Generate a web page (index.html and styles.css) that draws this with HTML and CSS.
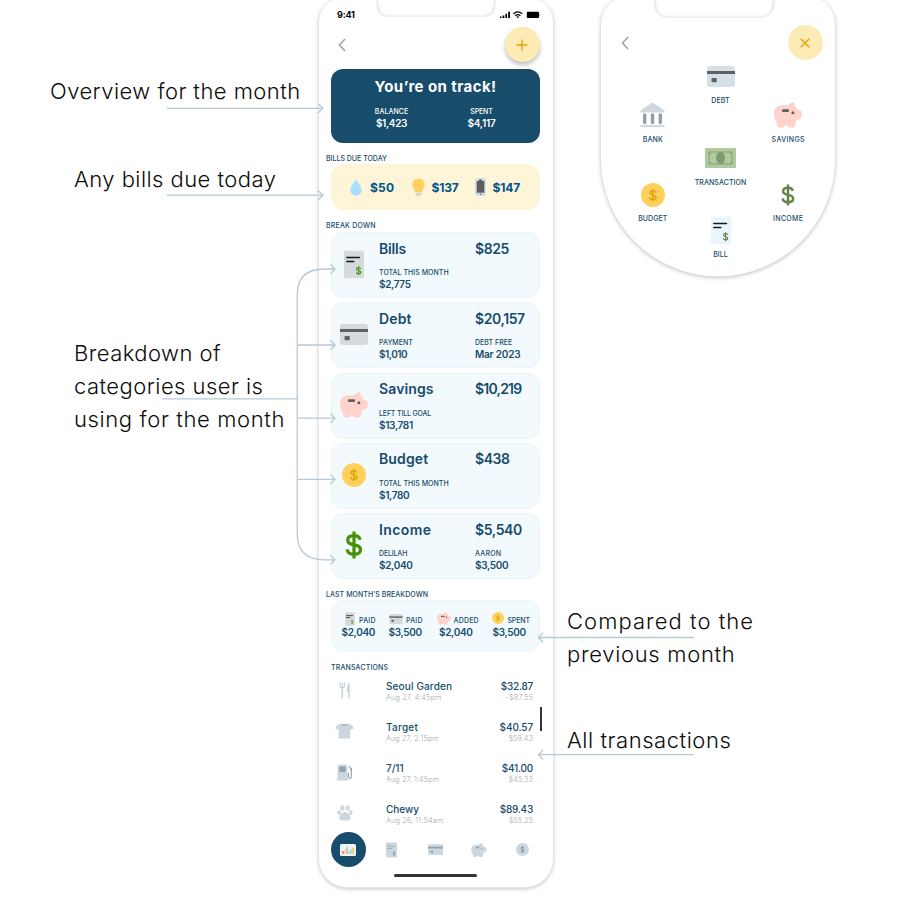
FILE: index.html
```
<!DOCTYPE html>
<html lang="en">
<head>
<meta charset="utf-8">
<title>Budget overview</title>
<link rel="stylesheet" href="styles.css">
</head>
<body>
<svg class="defs" width="0" height="0" aria-hidden="true">
  <symbol id="dollar" viewBox="0 0 18 28"><path d="M15 8.800C14.700 5.800 12.500 4.600 9 4.600C5.200 4.600 2.700 6.300 2.700 9.200C2.700 15.800 15.600 11.900 15.600 18.600C15.600 21.600 13 23.400 9 23.400C5 23.400 2.500 21.800 2.200 18.400M9 .5V27.500" fill="none" stroke="currentColor" stroke-width="3.200"/></symbol>
  <symbol id="receipt" viewBox="0 0 20 29">
    <path class="base" d="M0 0L1.700 1.800L3.300 0L5 1.800L6.700 0L8.300 1.800L10 0L11.700 1.800L13.300 0L15 1.800L16.700 0L18.300 1.800L20 0V29L18.300 27.200L16.700 29L15 27.200L13.300 29L11.700 27.200L10 29L8.300 27.200L6.700 29L5 27.200L3.300 29L1.700 27.200L0 29Z"/>
    <path class="mark" d="M2.800 7.500H15.500M2.800 11.600H9.800" stroke-width="1.500" stroke-linecap="round"/>
    <svg class="money" x="11.600" y="16" width="6" height="9.500" viewBox="0 0 18 28"><path d="M15 8.800C14.700 5.800 12.500 4.600 9 4.600C5.200 4.600 2.700 6.300 2.700 9.200C2.700 15.800 15.600 11.900 15.600 18.600C15.600 21.600 13 23.400 9 23.400C5 23.400 2.500 21.800 2.200 18.400M9 .5V27.500" fill="none" stroke="currentColor" stroke-width="3.500"/></svg>
  </symbol>
  <symbol id="card" viewBox="0 0 28 21"><rect class="base" width="28" height="21" rx="3"/><path class="dark" d="M0 5H28V8H0Z"/><rect class="dark" x="4.500" y="12" width="5.300" height="4.200" rx="1"/></symbol>
  <symbol id="pig" viewBox="0 0 28 25.400"><path class="base" d="M8.500 3H14C15 1.500 17 0 19.200 .2C20.600 .3 20.300 2 21 4.300C22.500 5.200 23.300 6.500 24 7.600C26.600 7.600 27.800 8.800 27.800 11C27.800 15 27 17 23.600 17.300C22.500 18.500 21.800 19 21.500 20.500C21.300 23.500 20.500 25 18.800 25.300H15.300C14 25 13 24 12.500 22.600H11C10.800 24 10 25.200 8.500 25.300H5.500C3.500 25 3 23 2.500 20C.5 17 0 14.500 0 11.500C0 6.500 3 3 8.500 3Z"/><rect class="dark" x="8" y="7" width="7" height="2.600" rx="1"/><circle class="dark" cx="18.900" cy="10.400" r="1.500"/></symbol>
  <symbol id="coin" viewBox="0 0 24 24"><circle class="base" cx="12" cy="12" r="12"/><svg class="money" x="7.600" y="5.600" width="8.600" height="13" viewBox="0 0 18 28"><path d="M15 8.800C14.700 5.800 12.500 4.600 9 4.600C5.200 4.600 2.700 6.300 2.700 9.200C2.700 15.800 15.600 11.900 15.600 18.600C15.600 21.600 13 23.400 9 23.400C5 23.400 2.500 21.800 2.200 18.400M9 .5V27.500" fill="none" stroke="currentColor" stroke-width="3.600"/></svg></symbol>
  <symbol id="back" viewBox="0 0 8 14"><path d="M7 1L1.500 7L7 13" fill="none" stroke="#95a3af" stroke-width="1.500"/></symbol>
</svg>

<main class="board">
  <aside class="notes notes-left">
    <p class="note overview">Overview for the month</p>
    <p class="note due">Any bills due today</p>
    <p class="note breakdown-note">Breakdown of<br>categories user is<br><span>using for the month</span></p>
  </aside>

  <section class="phone">
    <svg class="shell" viewBox="0 0 234 888" aria-hidden="true"><path d="M24 -2H53Q57.500 -2 57.500 3C57.500 12 62 17 71 17H163C172 17 176.500 12 176.500 3Q176.500 -2 181 -2H210A24 24 0 0 1 234 22V859.500A28 28 0 0 1 206 887.500H28A28 28 0 0 1 0 859.500V22A24 24 0 0 1 24 -2Z" fill="#fff"/></svg>
    <header class="status"><span class="clock">9:41</span>
      <svg width="42" height="9" viewBox="0 0 42 9"><path d="M1 6.500H2.500V8H1ZM3.600 5.500H5.300V8H3.600ZM6.400 3.800H8.100V8H6.400ZM9.200 1.800H11V8H9.200Z"/><path d="M14.300 3.900Q18.800 -.1 23.300 3.900M16.200 5.700Q18.800 3.500 21.400 5.700" fill="none" stroke="#000" stroke-width="1.200"/><path d="M17.400 6.700Q18.800 5.800 20.200 6.700L18.800 8.200Z"/><rect x="27.800" y="1.800" width="12.200" height="6.200" rx="1"/><path d="M40.700 3.700V6.300" stroke="#999" stroke-width=".8"/></svg>
    </header>
    <nav class="topbar"><svg width="8" height="14"><use href="#back"/></svg><button class="round raised" aria-label="Add"><svg width="12" height="12" viewBox="0 0 12 12"><path d="M6 .5V11.500M.5 6H11.500" stroke="#e3a70e" stroke-width="1.500"/></svg></button></nav>

    <div class="hero"><h1>You’re on track!</h1>
      <div class="hero-row"><div class="stat"><span class="cap">BALANCE</span><b class="amt">$1,423</b></div><div class="stat"><span class="cap tight">SPENT</span><b class="amt loose">$4,117</b></div></div>
    </div>

    <h2 class="label label-due">BILLS DUE TODAY</h2>
    <div class="due-card">
      <div class="due-item drop"><svg width="12" height="17" viewBox="0 0 12 17"><path d="M6 .3C8 4 11.700 7.500 11.700 11.200A5.700 5.500 0 0 1 .3 11.200C.3 7.500 4 4 6 .3Z" fill="#a8deff"/></svg><b class="fifty">$50</b></div>
      <div class="due-item bulb"><svg width="13" height="19" viewBox="0 0 13 19"><path d="M6.500 .5A6.300 6.300 0 0 1 12.800 6.800C12.800 10 10 11 9.800 14.500H3.200C3 11 .2 10 .2 6.800A6.300 6.300 0 0 1 6.500 .5Z" fill="#ffd15c"/><path d="M3 15.200H10L8.700 17.200L6.500 18.600L4.300 17.200Z" fill="#c9d3d8"/></svg><b>$137</b></div>
      <div class="due-item mobile"><svg width="11" height="18" viewBox="0 0 11 18"><rect x=".2" y=".2" width="10.600" height="17.500" rx="2" fill="#cfdbe2"/><path d="M1.700 3H9.300V14.700H1.700Z" fill="#5c5c5e"/><path d="M4 1.500H7V3H4Z" fill="#5c5c5e"/><circle cx="5.500" cy="16.200" r=".8" fill="#5c5c5e"/></svg><b>$147</b></div>
    </div>

    <h2 class="label label-break">BREAK DOWN</h2>
    <div class="breakdown">
      <article class="cat"><span class="ico"><svg class="receipt" width="20" height="29"><use href="#receipt"/></svg></span><div class="col"><h3 class="bills">Bills</h3><span class="cap">TOTAL THIS MONTH</span><b class="amt">$2,775</b></div><div class="col"><h3 class="sum">$825</h3></div></article>
      <article class="cat"><span class="ico"><svg class="card" width="28" height="21"><use href="#card"/></svg></span><div class="col"><h3>Debt</h3><span class="cap">PAYMENT</span><b class="amt thin">$1,010</b></div><div class="col"><h3 class="sum">$20,157</h3><span class="cap">DEBT FREE</span><b class="amt loose">Mar 2023</b></div></article>
      <article class="cat"><span class="ico"><svg class="pig" width="28" height="26"><use href="#pig"/></svg></span><div class="col"><h3>Savings</h3><span class="cap tight">LEFT TILL GOAL</span><b class="amt">$13,781</b></div><div class="col"><h3 class="sum narrow">$10,219</h3></div></article>
      <article class="cat"><span class="ico"><svg class="coin" width="24" height="24"><use href="#coin"/></svg></span><div class="col"><h3>Budget</h3><span class="cap">TOTAL THIS MONTH</span><b class="amt">$1,780</b></div><div class="col"><h3 class="sum">$438</h3></div></article>
      <article class="cat"><span class="ico"><svg class="income" width="18" height="28"><use href="#dollar"/></svg></span><div class="col"><h3 class="wide">Income</h3><span class="cap tight">DELILAH</span><b class="amt">$2,040</b></div><div class="col"><h3 class="sum">$5,540</h3><span class="cap open">AARON</span><b class="amt">$3,500</b></div></article>
    </div>

    <h2 class="label label-last">LAST MONTH’S BREAKDOWN</h2>
    <div class="last">
      <div class="past past-bill"><div class="past-top"><svg class="receipt" width="10" height="14"><use href="#receipt"/></svg><span class="cap open">PAID</span></div><b class="amt">$2,040</b></div>
      <div class="past past-card"><div class="past-top"><svg class="card" width="14" height="10"><use href="#card"/></svg><span class="cap open">PAID</span></div><b class="amt">$3,500</b></div>
      <div class="past past-pig"><div class="past-top"><svg class="pig" width="14" height="13"><use href="#pig"/></svg><span class="cap open">ADDED</span></div><b class="amt">$2,040</b></div>
      <div class="past past-coin"><div class="past-top"><svg class="coin" width="12" height="12"><use href="#coin"/></svg><span class="cap tight">SPENT</span></div><b class="amt">$3,500</b></div>
    </div>

    <h2 class="label label-trans">TRANSACTIONS</h2>
    <div class="list">
      <div class="row"><span class="row-ico"><svg width="12" height="17" viewBox="0 0 12 17"><path d="M1.200 .5V4Q1.200 6 3.300 6Q5.400 6 5.400 4V.5M3.300 .5V16.500" fill="none" stroke="#c4cfd7" stroke-width="1.100"/><path d="M3.300 7V16" stroke="#cdd6dc" stroke-width="1.600"/><path d="M10.800 .5V16.500H9.200V10H7.800C7.800 5 8.500 2 10.800 .5Z" fill="#cdd6dc"/></svg></span><div class="who"><b class="seoul">Seoul Garden</b><small class="long">Aug 27, 4:45pm</small></div><div class="paid"><b>$32.87</b><small class="minus">-$87.55</small></div></div>
      <div class="row"><span class="row-ico"><svg width="19" height="16" viewBox="0 0 19 16"><path d="M6.500 .5Q9.500 2.500 12.500 .5L16 1.500Q18.300 3 18.700 5.500L15.300 6.800V14.500Q15.300 15.500 14 15.500H5Q3.700 15.500 3.700 14.500V6.800L.3 5.500Q.7 3 3 1.500Z" fill="#cdd6dc"/><path d="M6.500 .5Q9.500 2.500 12.500 .5Q12 3 9.500 3Q7 3 6.500 .5Z" fill="#9eabb5"/></svg></span><div class="who"><b class="target">Target</b><small>Aug 27, 2:15pm</small></div><div class="paid"><b class="easy">$40.57</b><small>$59.43</small></div></div>
      <div class="row"><span class="row-ico"><svg width="17" height="17" viewBox="0 0 17 17"><path d="M1.500 2Q1.500 .5 3 .5H10Q11.500 .5 11.500 2V15H12.500V16.500H.5V15H1.500Z" fill="#cdd6dc"/><rect x="3.300" y="2.500" width="6.300" height="5.500" rx="1" fill="#94a2ad"/><path d="M11.500 9.500H12.500V13Q12.500 14.300 14 14.300Q15.300 14.300 15.300 13V5L13 2" fill="none" stroke="#94a2ad" stroke-width="1.100"/><path d="M14.500 4H16V7.500H14.500Z" fill="#94a2ad"/></svg></span><div class="who"><b>7/11</b><small>Aug 27, 1:45pm</small></div><div class="paid"><b>$41.00</b><small>$45.33</small></div></div>
      <div class="row"><span class="row-ico"><svg width="16" height="16" viewBox="0 0 16 16" fill="#cdd6dc"><ellipse cx="5.400" cy="3" rx="2" ry="2.800"/><ellipse cx="10.600" cy="3" rx="2" ry="2.800"/><ellipse cx="2.200" cy="7.500" rx="1.800" ry="2.500"/><ellipse cx="13.800" cy="7.500" rx="1.800" ry="2.500"/><path d="M8 7C10.800 7 14 11 13.600 13.500C13.200 15.700 11 15.700 8 15.200C5 15.700 2.800 15.700 2.400 13.500C2 11 5.200 7 8 7Z"/></svg></span><div class="who"><b>Chewy</b><small class="long">Aug 26, 11:54am</small></div><div class="paid"><b>$89.43</b><small>$55.25</small></div></div>
      <i class="scroll"></i>
    </div>

    <nav class="tabs">
      <span class="tab on"><svg width="16" height="12" viewBox="0 0 16 12"><rect width="16" height="12" rx="1.500" fill="#edf6fb"/><path d="M3 7V10" stroke="#e66b62" stroke-width="1.500"/><path d="M5.200 5V10M9.200 6.500V10" stroke="#ffce61" stroke-width="1.500"/><path d="M7.200 3V10" stroke="#aebfca" stroke-width="1.500"/><path d="M11 5.500V10" stroke="#8fd0ee" stroke-width="1.500"/><path d="M13.200 3.500V10" stroke="#f5be44" stroke-width="1.500"/></svg></span>
      <span class="tab"><svg class="gray" width="11" height="16"><use href="#receipt"/></svg></span>
      <span class="tab"><svg class="gray" width="15" height="11.500"><use href="#card"/></svg></span>
      <span class="tab"><svg class="gray" width="16" height="14"><use href="#pig"/></svg></span>
      <span class="tab"><svg class="gray" width="13" height="13"><use href="#coin"/></svg></span>
    </nav>
    <div class="home"></div>
  </section>

  <section class="right">
    <div class="menu">
      <svg class="shell" viewBox="0 0 234 277" aria-hidden="true"><path d="M24 -3H49Q53 -3 53 2C53 12 58 18 68 18H158C168 18 173.500 12 173.500 2Q173.500 -3 178 -3H210A27 27 0 0 1 234 24V159.500A117 117 0 0 1 0 159.500V24A27 27 0 0 1 24 -3Z" fill="#fff"/></svg>
      <nav class="menubar"><svg width="8" height="14"><use href="#back"/></svg><button class="round" aria-label="Close"><svg width="10" height="10" viewBox="0 0 10 10"><path d="M.7 .7L9.300 9.300M9.300 .7L.7 9.300" stroke="#e3a70e" stroke-width="1.500"/></svg></button></nav>
      <div class="wheel">
        <div class="side">
          <div class="pick"><span><svg width="25" height="26" viewBox="0 0 25 26"><path d="M12.500 .5L24.500 8.500V10.500H.5V8.500Z" fill="#ced7dd"/><path d="M4.700 13V20.500M12.500 13V20.500M20.300 13V20.500" stroke="#909fab" stroke-width="3.400" stroke-linecap="round"/><rect x=".5" y="23.200" width="24" height="2" fill="#ced7dd"/></svg></span>BANK</div>
          <div class="pick"><span><svg class="coin" width="24" height="24"><use href="#coin"/></svg></span>BUDGET</div>
        </div>
        <div class="middle">
          <div class="pick"><span><svg class="card blue" width="28" height="21"><use href="#card"/></svg></span>DEBT</div>
          <div class="pick cash"><span><svg width="31" height="20" viewBox="0 0 31 20"><rect width="31" height="20" rx=".8" fill="#b1c99f"/><rect x="4" y="4" width="23" height="12" fill="none" stroke="#8da77b" stroke-width="1.200"/><ellipse cx="15.500" cy="10" rx="4.500" ry="6" fill="#7f9a6d"/><path d="M4 4h2v2H4zM25 4h2v2h-2zM4 14h2v2H4zM25 14h2v2h-2z" fill="#8da77b"/></svg></span>TRANSACTION</div>
          <div class="pick bill"><span><svg class="receipt blue" width="20" height="29"><use href="#receipt"/></svg></span>BILL</div>
        </div>
        <div class="side">
          <div class="pick open"><span><svg class="pig" width="28" height="26"><use href="#pig"/></svg></span>SAVINGS</div>
          <div class="pick open"><span><svg class="moss" width="14" height="22"><use href="#dollar"/></svg></span>INCOME</div>
        </div>
      </div>
    </div>
    <p class="note compared"><span>Compared to the</span><br>previous month</p>
    <p class="note all">All transactions</p>
  </section>

  <svg class="links" width="903" height="908" viewBox="0 0 903 908" aria-hidden="true">
    <path d="M167 108.300H323M318 103.500L323 108.300L318 113M167 195.200H323M318 190.400L323 195.200L318 200M162 398.800H297.300M335 269H325Q297.300 269 297.300 294V534Q297.300 559.800 325 559.800H335M297.300 345H335M297.300 418.200H335M297.300 479.300H335M330.500 264.300L335 269L330.500 273.700M330.500 340.300L335 345L330.500 349.700M330.500 413.500L335 418.200L330.500 422.900M330.500 474.600L335 479.300L330.500 484M330.500 555.100L335 559.800L330.500 564.500M694 637.500H538.500M543 632.700L538.500 637.500L543 642.300M694 754.700H538.500M543 749.900L538.500 754.700L543 759.500"/>
  </svg>
</main>
</body>
</html>
```
FILE: styles.css
```
* { box-sizing: border-box; }
body { margin: 0; background: #fff; font-family: Inter, "Open Sans", sans-serif; color: #174c6b; overflow: hidden; }
h1, h2, h3, p { margin: 0; }
svg { display: block; flex: none; }
button { border: 0; padding: 0; }
.defs { position: absolute; }

.board { position: relative; display: grid; grid-template-columns: 319px 234px 1fr; width: 903px; height: 908px; overflow: hidden; }

/* Notes */
.note { color: #0b0b0b; font-size: 22px; font-weight: 300; line-height: 33px; letter-spacing: .45px; white-space: nowrap; }
.notes-left { padding: 75px 0 0 74px; }
.overview { margin-left: -24px; }
.due { margin-top: 55px; }
.breakdown-note { margin-top: 141px; }
.breakdown-note span { letter-spacing: .62px; }
.compared { margin: 328px 0 0 14px; letter-spacing: .7px; }
.compared span { letter-spacing: 1.050px; }
.all { margin: 53px 0 0 14px; letter-spacing: .55px; }
.links { position: absolute; inset: 0; pointer-events: none; }
.links path { fill: none; stroke: #b7c9d6; stroke-width: 1.300; }

/* Icon palettes */
.base { fill: var(--base, #d4dadd); }
.dark { fill: var(--dark, #5e6162); }
.mark { stroke: var(--mark, #17171c); }
.money { color: var(--money, #4c9a17); }
.card.blue { --base: #d3e0e8; --dark: #5e6064; }
.receipt.blue { --base: #eaf4fc; --money: #66834e; }
.pig { --base: #ffd3cb; --dark: #5b5f66; }
.coin { --base: #ffd15c; --money: #e2a610; }
.gray { --base: #cdd7dd; --dark: #94a3ae; --mark: #94a3ae; --money: #84949f; }
.income { color: #449208; }
.moss { color: #64824c; }

/* Phone */
.phone, .menu { position: relative; width: 234px; }
.phone { display: flex; flex-direction: column; }
.phone > :not(.shell) { position: relative; }
.shell { position: absolute; top: 0; left: 0; width: 234px; overflow: visible; filter: drop-shadow(0 1.500px 2px rgba(0, 0, 0, .27)); }
.status { display: flex; justify-content: space-between; align-items: center; height: 28px; padding: 0 12px 0 18px; }
.clock { color: #000; font-size: 9px; font-weight: 700; letter-spacing: -.2px; }
.topbar { display: flex; justify-content: space-between; align-items: center; height: 33.500px; padding: 0 13.500px 0 18.500px; margin-bottom: 7px; }
.round { display: grid; place-items: center; width: 35px; height: 35px; border-radius: 50%; background: #fcebb5; }
.raised { box-shadow: 0 3px 4px rgba(0, 0, 0, .25); }

.cap { font-size: 7px; font-weight: 500; line-height: 10px; letter-spacing: .03px; white-space: nowrap; }
.cap.tight { letter-spacing: -.15px; }
.cap.open { letter-spacing: .19px; }
.amt { font-size: 10px; font-weight: 600; line-height: 12px; letter-spacing: -.33px; white-space: nowrap; }
.amt.loose { letter-spacing: -.19px; }
.amt.thin { letter-spacing: -.48px; }

.hero { height: 74.500px; margin: 0 13px 0 12px; padding-top: 8px; border-radius: 12px; background: #174c6b; color: #fff; }
.hero h1 { font-size: 15px; font-weight: 700; line-height: 20px; letter-spacing: .42px; text-align: center; }
.hero-row { display: grid; grid-template-columns: 90px 90px; justify-content: center; padding-top: 10.500px; padding-left: 2px; }
.stat { display: flex; flex-direction: column; align-items: center; }

.label { display: flex; align-items: center; margin: 0 0 0 7px; font-size: 7px; font-weight: 500; line-height: 10px; white-space: nowrap; }
.label-due { height: 21px; padding-top: 10px; }
.label-break { height: 22px; padding-top: 9px; letter-spacing: .2px; }
.label-last { height: 20.500px; padding-top: 9.500px; letter-spacing: .06px; }
.label-trans { height: 26px; margin-left: 12px; padding-top: 6.500px; letter-spacing: .15px; }

.due-card { display: flex; align-items: center; height: 46px; margin: 0 13px 0 12px; padding-left: 19px; border-radius: 13px; background: #fef4d8; color: #00558a; font-size: 12px; line-height: 16px; letter-spacing: -.15px; }
.due-item { display: flex; align-items: center; gap: 6.500px; height: 20px; }
.due-item b { padding-top: 1px; }
.drop { width: 62px; gap: 8px; }
.bulb { width: 63px; }
.fifty { letter-spacing: .2px; }

.breakdown { display: flex; flex-direction: column; gap: 4.250px; margin: 0 13px .5px 12px; }
.cat { display: grid; grid-template-columns: 47px 96px 1fr; height: 66px; border: 1px solid #ebf5fa; border-radius: 12px; background: #f3fafe; }
.ico { display: flex; justify-content: center; align-items: center; width: 44px; height: 62px; }
.col { display: flex; flex-direction: column; align-items: flex-start; padding-top: 6.500px; }
h3 { font-size: 14px; font-weight: 600; line-height: 18px; letter-spacing: .12px; margin-bottom: 10.500px; }
h3.bills { letter-spacing: -.2px; }
h3.wide { letter-spacing: .42px; }
h3.sum { letter-spacing: -.42px; }
h3.narrow { letter-spacing: -.8px; }

.last { display: flex; height: 52px; margin: 0 13px 0 12px; padding: 10.500px 0 0 9.500px; border: 1px solid #ebf5fa; border-radius: 13px; background: #f3fafe; }
.past-bill { width: 47px; }
.past-card { width: 48px; }
.past-pig { width: 55px; }
.past-top { display: flex; align-items: flex-start; height: 14px; gap: 3.500px; }
.past-top .cap { margin-top: 4px; }
.past .amt { display: block; }
.past-bill .past-top { padding-left: 3px; gap: 4.500px; }
.past-card .past-top svg { margin-top: 2.500px; }
.past-pig .past-top { gap: 3px; }
.past-pig .amt { padding-left: 2.500px; }
.past-coin .past-top { gap: 4px; }
.past-coin .amt { padding-left: 1px; }

.list { display: flex; flex-direction: column; gap: 17px; }
.row { display: grid; grid-template-columns: 50px 1fr auto; height: 24px; padding: 0 20px 0 17px; white-space: nowrap; }
.row-ico { display: flex; justify-content: center; align-items: center; width: 17px; }
.row b { display: block; font-size: 10px; font-weight: 500; line-height: 16px; letter-spacing: -.23px; }
.who b { letter-spacing: -.05px; }
.who .seoul { letter-spacing: .14px; }
.who .target { letter-spacing: .25px; }
.paid { text-align: right; }
.paid .easy { letter-spacing: -.1px; }
.row small { display: block; color: #a7adb1; font-size: 7.300px; font-weight: 300; line-height: 8px; letter-spacing: .06px; }
.row .long { letter-spacing: .12px; }
.row .minus { letter-spacing: .2px; }
.scroll { position: absolute; left: 221px; top: 29px; width: 2px; height: 24px; background: #333; }

.tabs { display: flex; margin: 7px 0 0 11.500px; }
.tab { display: grid; place-items: center; width: 35px; height: 35px; margin-right: 8.500px; border-radius: 50%; }
.tab.on { background: #174c6b; }
.home { width: 83px; height: 3.500px; margin: 6.500px 0 0 75px; border-radius: 2px; background: #333; }

/* Add menu */
.right { display: flex; flex-direction: column; align-items: flex-start; }
.menu { height: 277px; margin-left: 48px; }
.menubar { position: relative; display: flex; justify-content: space-between; align-items: center; height: 35px; margin: 25px 12.500px 1.500px 20px; }
.wheel { position: relative; display: grid; grid-template-columns: repeat(3, 67.700px); justify-content: center; padding-left: 5px; }
.side, .middle { display: flex; flex-direction: column; }
.side { gap: 35.800px; padding-top: 39px; }
.pick { display: flex; flex-direction: column; align-items: center; gap: 4.500px; height: 44px; font-size: 7px; font-weight: 500; line-height: 10px; letter-spacing: .08px; }
.pick span { display: grid; place-items: center; height: 30px; }
.pick.open { letter-spacing: .34px; }
.cash { margin-top: 38px; }
.bill { margin-top: 28.500px; }
```
